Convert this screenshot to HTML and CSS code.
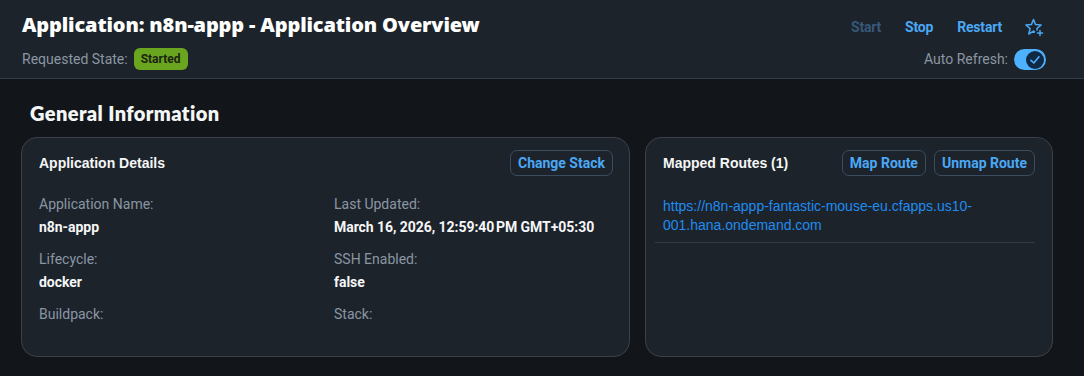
FILE: index.html
```html
<!DOCTYPE html>
<html lang="en">
<head>
<meta charset="utf-8">
<title>Application Overview</title>
<link rel="stylesheet" href="styles.css">
</head>
<body>
<header class="page-header">
  <div class="header-row">
    <h1 class="title">Application: n8n-appp - Application Overview</h1>
    <div class="actions">
      <button class="action disabled">Start</button>
      <button class="action">Stop</button>
      <button class="action">Restart</button>
      <button class="icon-btn" aria-label="Add to favorites">
        <svg width="19" height="19" viewBox="0 0 19 19" fill="none" stroke-linejoin="round" stroke-linecap="round">
          <path d="M8.5 1.5 L10.6 6.6 L16.1 7 L11.9 10.6 L13.2 16 L8.5 13.1 L3.8 16 L5.1 10.6 L0.9 7 L6.4 6.6 Z" stroke="#4aa8f5" stroke-width="1.5"/>
          <path d="M15 12 V18.2 M11.9 15.1 H18.1" stroke="#1d232a" stroke-width="4.5"/>
          <path d="M15 12.6 V17.6 M12.5 15.1 H17.5" stroke="#4aa8f5" stroke-width="1.5"/>
        </svg>
      </button>
    </div>
  </div>
  <div class="header-row sub">
    <div class="state">
      <span class="muted">Requested State:</span>
      <span class="badge">Started</span>
    </div>
    <div class="refresh">
      <span class="muted">Auto Refresh:</span>
      <span class="toggle"><span class="knob">
        <svg width="12" height="12" viewBox="0 0 12 12" fill="none" stroke="#4db1ff" stroke-width="1.6" stroke-linecap="round" stroke-linejoin="round"><path d="M2 6.4 L4.8 9 L10 2.8"/></svg>
      </span></span>
    </div>
  </div>
</header>

<main class="content">
  <h2 class="section-title">General Information</h2>
  <div class="cards">
    <section class="card">
      <div class="card-head">
        <h3 class="card-title">Application Details</h3>
        <button class="outline-btn">Change Stack</button>
      </div>
      <div class="details">
        <div class="field">
          <div class="label">Application Name:</div>
          <div class="value">n8n-appp</div>
        </div>
        <div class="field">
          <div class="label">Last Updated:</div>
          <div class="value">March 16, 2026, 12:59:40&#8239;PM GMT+05:30</div>
        </div>
        <div class="field">
          <div class="label">Lifecycle:</div>
          <div class="value">docker</div>
        </div>
        <div class="field">
          <div class="label">SSH Enabled:</div>
          <div class="value">false</div>
        </div>
        <div class="field">
          <div class="label">Buildpack:</div>
          <div class="value"></div>
        </div>
        <div class="field">
          <div class="label">Stack:</div>
          <div class="value"></div>
        </div>
      </div>
    </section>
    <section class="card routes">
      <div class="card-head">
        <h3 class="card-title">Mapped Routes (1)</h3>
        <div class="btn-group">
          <button class="outline-btn">Map Route</button>
          <button class="outline-btn">Unmap Route</button>
        </div>
      </div>
      <ul class="route-list">
        <li><a class="route-link" href="#">https://n8n-appp-fantastic-mouse-eu.cfapps.us10-001.hana.ondemand.com</a></li>
      </ul>
    </section>
  </div>
</main>
</body>
</html>
```

FILE: styles.css
```css
* { box-sizing: border-box; }

body {
  margin: 0;
  background: #12161a;
  color: #f5f6f7;
  font-family: Roboto, "Noto Sans", sans-serif;
}

button {
  font-family: inherit;
  background: none;
  border: none;
  padding: 0;
  cursor: pointer;
}

.page-header {
  background: #1d232a;
  border-bottom: 1px solid #323a44;
  height: 79px;
  padding: 11px 26px 0 22px;
}

.header-row {
  display: flex;
  justify-content: space-between;
  align-items: center;
}

.header-row.sub {
  margin-top: 9px;
  padding-right: 12px;
}

.title {
  margin: 0;
  font-family: "Noto Sans", Lato, sans-serif;
  font-size: 20px;
  font-weight: 900;
  line-height: 28px;
  letter-spacing: -0.15px;
  color: #ffffff;
}

.actions {
  display: flex;
  align-items: center;
  gap: 24px;
  padding-right: 14px;
  padding-top: 4px;
}

.action {
  font-size: 14px;
  font-weight: 700;
  letter-spacing: -0.2px;
  color: #4aa8f5;
}

.action.disabled {
  color: #365879;
}

.icon-btn {
  display: flex;
  width: 19px;
  height: 19px;
  margin-left: -1px;
}

.state, .refresh {
  display: flex;
  align-items: center;
  gap: 6px;
}

.muted {
  font-size: 14px;
  color: #8a96a3;
}

.badge {
  background: #6aa51f;
  color: #1b2610;
  font-size: 12px;
  font-weight: 700;
  padding: 0 7px;
  height: 22px;
  line-height: 22px;
  border-radius: 6px;
}

.toggle {
  display: flex;
  align-items: center;
  justify-content: flex-end;
  width: 32px;
  height: 21px;
  border-radius: 11px;
  background: #4db1ff;
  padding: 0 2px;
  margin-top: 1px;
}

.knob {
  display: flex;
  align-items: center;
  justify-content: center;
  width: 18px;
  height: 18px;
  border-radius: 50%;
  background: #0f2a45;
}

.content {
  padding: 0 31px 0 21px;
}

.section-title {
  margin: 0;
  padding: 22px 0 12px 9px;
  font-family: Lato, Roboto, sans-serif;
  font-size: 20px;
  font-weight: 800;
  letter-spacing: 0.4px;
  line-height: 24px;
  color: #f5f6f7;
}

.cards {
  display: grid;
  grid-template-columns: 609px 1fr;
  gap: 15px;
}

.card {
  height: 220px;
  background: #1d232b;
  border: 1px solid #3c4149;
  border-radius: 16px;
  padding: 12px 16px 0 17px;
}

.routes {
  padding: 12px 17px 0 9px;
}

.card-head {
  display: flex;
  justify-content: space-between;
  align-items: center;
  height: 26px;
}

.routes .card-head {
  padding-left: 8px;
}

.card-title {
  margin: 0;
  font-family: "Liberation Sans", Arial, sans-serif;
  font-size: 14px;
  font-weight: 700;
  color: #f5f6f7;
}

.btn-group {
  display: flex;
  gap: 8px;
}

.outline-btn {
  height: 26px;
  padding: 0 7px;
  border: 1px solid #3a4d60;
  border-radius: 7px;
  color: #4aa8f5;
  font-size: 14px;
  font-weight: 700;
}

.details {
  display: grid;
  grid-template-columns: 295px 1fr;
  row-gap: 12px;
  margin-top: 18px;
}

.label {
  font-size: 14px;
  color: #8a96a3;
  line-height: 20px;
}

.value {
  margin-top: 3px;
  font-size: 14px;
  font-weight: 700;
  letter-spacing: -0.05px;
  color: #f5f6f7;
  line-height: 20px;
  min-height: 20px;
}

.route-list {
  list-style: none;
  margin: 20px 0 0;
  padding: 0;
}

.route-list li {
  padding: 0 8px 8px;
  border-bottom: 1px solid #323a44;
}

.route-link {
  font-family: "Liberation Sans", Arial, sans-serif;
  font-size: 14px;
  line-height: 16px;
  color: #1f8cf0;
  text-decoration: none;
}
```
